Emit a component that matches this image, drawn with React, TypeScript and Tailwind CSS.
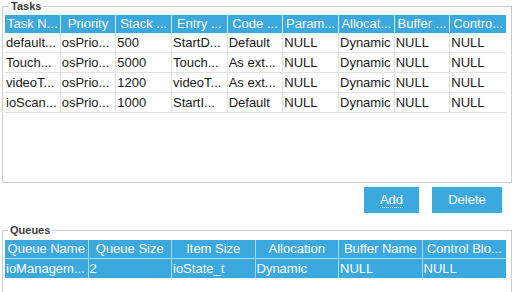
import React from "react";

const taskHeaders = ["Task N...", "Priority", "Stack ...", "Entry ...", "Code ...", "Param...", "Allocat...", "Buffer ...", "Contro..."];
const taskRows = [
  ["default...", "osPrio...", "500", "StartD...", "Default", "NULL", "Dynamic", "NULL", "NULL"],
  ["Touch...", "osPrio...", "5000", "Touch...", "As ext...", "NULL", "Dynamic", "NULL", "NULL"],
  ["videoT...", "osPrio...", "1200", "videoT...", "As ext...", "NULL", "Dynamic", "NULL", "NULL"],
  ["ioScan...", "osPrio...", "1000", "StartI...", "Default", "NULL", "Dynamic", "NULL", "NULL"],
];
const queueHeaders = ["Queue Name", "Queue Size", "Item Size", "Allocation", "Buffer Name", "Control Blo..."];
const queueRow = ["ioManagem...", "2", "ioState_t", "Dynamic", "NULL", "NULL"];

export default function App() {
  return (
    <div
      className="w-[514px] h-[292px] overflow-hidden bg-white pl-[2px] pr-[2px] text-[13px] text-[#1a1a1a]"
      style={{ fontFamily: '"Liberation Sans", Arial, sans-serif' }}
    >
      <div className="relative mt-[6px] h-[177px] border border-[#cdcdcd] pl-[2px] pr-[4px] pt-[8px]">
        <div className="absolute left-[6px] -top-[7px] bg-white px-[2px] text-[11px] leading-[12px] text-[#3c3c3c] font-semibold">
          Tasks
        </div>
        <div className="w-[501px]">
          <div className="grid grid-cols-9 h-[18px] bg-[#3ba8de] text-white">
            {taskHeaders.map((h, i) => (
              <div
                key={i}
                className={`flex items-center justify-center whitespace-nowrap overflow-hidden leading-[18px] ${i < 8 ? "border-r border-[#cfe9f7]" : ""}`}
              >
                {h}
              </div>
            ))}
          </div>
          {taskRows.map((r, ri) => (
            <div key={ri} className="grid grid-cols-9 h-[20px] border-b border-[#e2e2e2]">
              {r.map((c, ci) => (
                <div
                  key={ci}
                  className={`flex items-center pl-[1px] whitespace-nowrap overflow-hidden ${ci < 8 ? "border-r border-[#e2e2e2]" : ""}`}
                >
                  {c}
                </div>
              ))}
            </div>
          ))}
        </div>
      </div>
      <div className="flex justify-end gap-[13px] pr-[10px] mt-[4px]">
        <button className="w-[55px] h-[26px] bg-[#3ba8de] text-white text-[13px] flex items-center justify-center">
          <span className="border-b border-dotted border-white leading-[14px]">Add</span>
        </button>
        <button className="w-[70px] h-[26px] bg-[#3ba8de] text-white text-[13px] flex items-center justify-center">
          Delete
        </button>
      </div>
      <div className="relative mt-[17px] h-[100px] border border-[#cdcdcd] pl-[2px] pr-[4px] pt-[9px]">
        <div className="absolute left-[5px] -top-[7px] bg-white px-[2px] text-[11px] leading-[12px] text-[#3c3c3c] font-semibold">
          Queues
        </div>
        <div className="w-[501px]">
          <div className="grid grid-cols-6 h-[18px] bg-[#3ba8de] text-white">
            {queueHeaders.map((h, i) => (
              <div
                key={i}
                className={`flex items-center justify-center whitespace-nowrap overflow-hidden ${i < 5 ? "border-r border-[#a9d9f1]" : ""}`}
              >
                {h}
              </div>
            ))}
          </div>
          <div className="grid grid-cols-6 h-[20px] bg-[#3ba8de] text-white border-t border-[#a9d9f1]">
            {queueRow.map((c, i) => (
              <div
                key={i}
                className={`flex items-center pl-[1px] whitespace-nowrap overflow-hidden ${i < 5 ? "border-r border-[#a9d9f1]" : ""}`}
              >
                {c}
              </div>
            ))}
          </div>
        </div>
      </div>
    </div>
  );
}
